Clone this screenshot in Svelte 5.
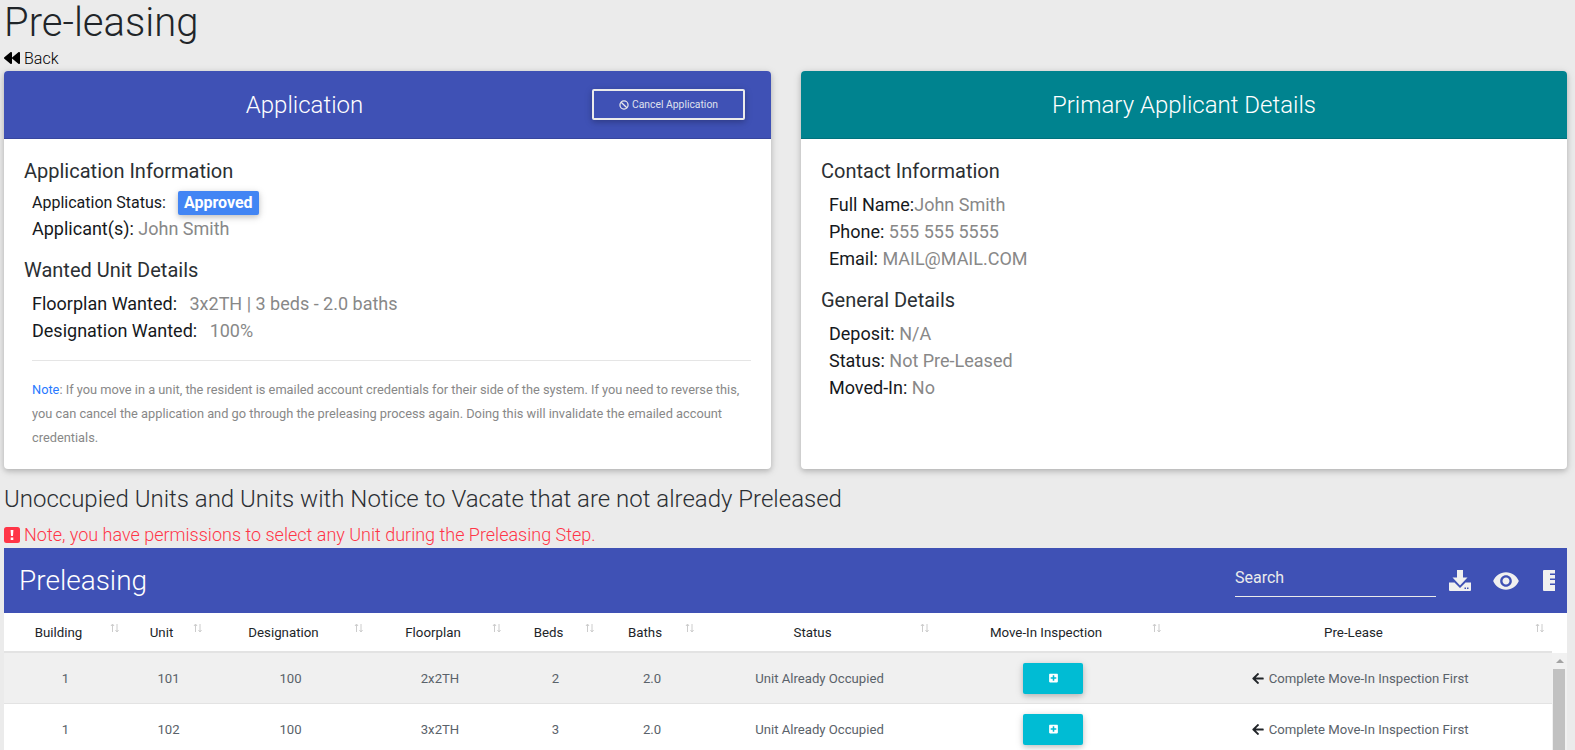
<script>
	const columns = ['Building', 'Unit', 'Designation', 'Floorplan', 'Beds', 'Baths', 'Status', 'Move-In Inspection', 'Pre-Lease'];

	const units = [
		{ building: 1, unit: 101, designation: 100, floorplan: '2x2TH', beds: 2, baths: '2.0' },
		{ building: 1, unit: 102, designation: 100, floorplan: '3x2TH', beds: 3, baths: '2.0' }
	];

	const plusSquare =
		'M400 32H48C21.5 32 0 53.5 0 80v352c0 26.5 21.5 48 48 48h352c26.5 0 48-21.5 48-48V80c0-26.5-21.5-48-48-48zm-32 252c0 6.6-5.4 12-12 12h-92v92c0 6.6-5.4 12-12 12h-56c-6.6 0-12-5.4-12-12v-92H92c-6.6 0-12-5.4-12-12v-56c0-6.6 5.4-12 12-12h92v-92c0-6.6 5.4-12 12-12h56c6.6 0 12 5.4 12 12v92h92c6.6 0 12 5.4 12 12v56z';
	const arrowLeft =
		'M257.5 445.1l-22.2 22.2c-9.4 9.4-24.6 9.4-33.9 0L7 273c-9.4-9.4-9.4-24.6 0-33.9L201.4 44.7c9.4-9.4 24.6-9.4 33.9 0l22.2 22.2c9.5 9.5 9.3 25-.4 34.3L136.6 216H424c13.3 0 24 10.7 24 24v32c0 13.3-10.7 24-24 24H136.6l120.5 114.8c9.8 9.3 10 24.8.4 34.3z';
</script>

<div class="page">
	<h1>Pre-leasing</h1>
	<a class="back" href="#back">
		<svg viewBox="0 0 512 512" class="back-icon"><path d="M11.5 280.6l192 160c20.6 17.2 52.5 2.8 52.5-24.6V96c0-27.4-31.9-41.8-52.5-24.6l-192 160c-15.3 12.8-15.3 36.4 0 49.2zm256 0l192 160c20.6 17.2 52.5 2.8 52.5-24.6V96c0-27.4-31.9-41.8-52.5-24.6l-192 160c-15.3 12.8-15.3 36.4 0 49.2z" /></svg>
		Back
	</a>

	<div class="cards">
		<section class="card">
			<header class="card-header indigo with-action">
				<h2>Application</h2>
				<button class="cancel">
					<svg viewBox="0 0 16 16" class="ban"><circle cx="8" cy="8" r="6.5" /><path d="M3.5 3.5l9 9" /></svg>
					Cancel Application
				</button>
			</header>
			<div class="card-body">
				<h3>Application Information</h3>
				<div class="info">
					<p class="status-line">Application Status: <span class="badge">Approved</span></p>
					<p>Applicant(s): <span class="muted">John Smith</span></p>
				</div>
				<h3>Wanted Unit Details</h3>
				<div class="info">
					<p>Floorplan Wanted: <span class="muted gap">3x2TH | 3 beds - 2.0 baths</span></p>
					<p>Designation Wanted: <span class="muted gap">100%</span></p>
				</div>
				<hr />
				<p class="note">
					<span class="note-label">Note</span>: If you move in a unit, the resident is emailed account
					credentials for their side of the system. If you need to reverse this, you can cancel the
					application and go through the preleasing process again. Doing this will invalidate the
					emailed account credentials.
				</p>
			</div>
		</section>

		<section class="card">
			<header class="card-header teal">
				<h2>Primary Applicant Details</h2>
			</header>
			<div class="card-body">
				<h3>Contact Information</h3>
				<div class="info">
					<p>Full Name:<span class="muted">John Smith</span></p>
					<p>Phone: <span class="muted">555 555 5555</span></p>
					<p>Email: <span class="muted">MAIL@MAIL.COM</span></p>
				</div>
				<h3>General Details</h3>
				<div class="info">
					<p>Deposit: <span class="muted">N/A</span></p>
					<p>Status: <span class="muted">Not Pre-Leased</span></p>
					<p>Moved-In: <span class="muted">No</span></p>
				</div>
			</div>
		</section>
	</div>

	<h4>Unoccupied Units and Units with Notice to Vacate that are not already Preleased</h4>
	<p class="warning">
		<svg viewBox="0 0 16 16" class="warning-icon">
			<rect width="16" height="16" rx="2.5" />
			<path class="mark" d="M6.6 3h2.8l-.4 6H7zM6.7 10.4h2.6V13H6.7z" />
		</svg>
		Note, you have permissions to select any Unit during the Preleasing Step.
	</p>

	<div class="table-card">
		<div class="toolbar">
			<span class="toolbar-title">Preleasing</span>
			<div class="toolbar-tools">
				<div class="search">Search</div>
				<svg viewBox="0 0 22 21" class="tool download">
					<path d="M8 0h6v7.500h4.500L11 15.500 3.500 7.500H8z" />
					<path d="M0 12.500h5.500l5.500 5.500 5.500-5.500H22V20a1 1 0 0 1-1 1H1a1 1 0 0 1-1-1z" />
					<path class="dots" d="M15.500 17.500H17v1.500h-1.500zM18 17.500h1.500v1.500H18z" />
				</svg>
				<svg viewBox="0 0 24 24" class="tool eye"><path d="M12 4.500C7 4.500 2.730 7.610 1 12c1.730 4.390 6 7.500 11 7.500s9.270-3.110 11-7.500c-1.730-4.390-6-7.500-11-7.500zM12 17c-2.760 0-5-2.240-5-5s2.240-5 5-5 5 2.240 5 5-2.240 5-5 5zm0-8c-1.660 0-3 1.340-3 3s1.340 3 3 3 3-1.340 3-3-1.340-3-3-3z" /></svg>
				<svg viewBox="0 0 12 21" class="ruler"><path d="M1 0h11v3.500H7V5h5v3.500H7V10h5v3.500H7V15h5v6H1a1 1 0 0 1-1-1V1a1 1 0 0 1 1-1z" /></svg>
			</div>
		</div>

		<div class="head-row">
			{#each columns as label}
				<div class="head-cell">
					{label}
					<svg viewBox="0 0 10 10" class="sort"><path d="M2.500 9V1.500M1 3l1.500-2L4 3" /><path d="M7 1v7.500M5.500 7L7 9l1.500-2" /></svg>
				</div>
			{/each}
		</div>

		<div class="scroll-area">
			<div class="rows">
				{#each units as row, i}
					<div class="row" class:striped={i % 2 === 0}>
						<div>{row.building}</div>
						<div>{row.unit}</div>
						<div>{row.designation}</div>
						<div>{row.floorplan}</div>
						<div>{row.beds}</div>
						<div>{row.baths}</div>
						<div>Unit Already Occupied</div>
						<div>
							<button class="inspect"><svg viewBox="0 0 448 512"><path d={plusSquare} /></svg></button>
						</div>
						<div>
							<svg viewBox="0 0 448 512" class="arrow"><path d={arrowLeft} /></svg>
							Complete Move-In Inspection First
						</div>
					</div>
				{/each}
			</div>
			<div class="scrollbar">
				<div class="scroll-up"></div>
				<div class="scroll-thumb"></div>
			</div>
		</div>
	</div>
</div>

<style>
	:global(body) {
		margin: 0;
		background: #ebebeb;
		overflow: hidden;
	}

	.page {
		height: 750px;
		overflow: hidden;
		padding: 0 8px 0 4px;
		box-sizing: border-box;
		font-family: Roboto, sans-serif;
		color: #212529;
	}

	h1 {
		margin: 0;
		height: 48px;
		font-size: 40px;
		line-height: 46px;
		font-weight: 300;
	}

	.back {
		display: flex;
		align-items: flex-start;
		gap: 4px;
		height: 23px;
		font-size: 16px;
		font-weight: 300;
		line-height: 21px;
		color: #000;
		text-decoration: none;
	}

	.back-icon {
		width: 16px;
		height: 16px;
		margin-top: 2px;
		fill: #000;
	}

	.cards {
		display: grid;
		grid-template-columns: 767px 766px;
		gap: 30px;
	}

	.card {
		height: 398px;
		background: #fff;
		border-radius: 4px;
		box-shadow: 0 2px 5px rgba(0, 0, 0, 0.16), 0 2px 10px rgba(0, 0, 0, 0.12);
		overflow: hidden;
	}

	.card-header {
		height: 68px;
		display: flex;
		align-items: center;
		justify-content: center;
		color: #fff;
		box-sizing: border-box;
		border-bottom: 1px solid rgba(0, 0, 0, 0.125);
	}

	.with-action {
		padding: 0 26px 0 13px;
	}

	.with-action h2 {
		flex: 1;
		text-align: center;
	}

	.indigo {
		background: #3f51b5;
	}

	.teal {
		background: #00838f;
	}

	h2 {
		margin: 0;
		font-size: 24px;
		font-weight: 300;
	}

	.cancel {
		width: 153px;
		height: 31px;
		display: flex;
		align-items: center;
		justify-content: center;
		gap: 3px;
		padding: 0;
		background: transparent;
		border: 2px solid #ebebeb;
		border-radius: 2px;
		color: #dfe0ee;
		font-family: inherit;
		font-size: 10.35px;
		box-shadow: 0 2px 5px rgba(0, 0, 0, 0.16), 0 2px 10px rgba(0, 0, 0, 0.12);
	}

	.ban {
		width: 10px;
		height: 10px;
		fill: none;
		stroke: #ebebeb;
		stroke-width: 2;
	}

	.card-body {
		padding: 20px;
	}

	h3 {
		margin: 0 0 8px;
		font-size: 20px;
		line-height: 24px;
		font-weight: 400;
		color: #2b2f33;
	}

	.info {
		margin: 0 0 16px 8px;
	}

	.info p {
		margin: 0;
		font-size: 18px;
		line-height: 27px;
		color: #16191c;
	}

	.info .status-line {
		font-size: 16px;
		line-height: 24px;
	}

	.muted {
		color: #888;
	}

	.gap {
		margin-left: 8px;
	}

	.badge {
		display: inline-block;
		margin-left: 8px;
		padding: 0 6px;
		line-height: 24px;
		background: #4285f4;
		color: #fff;
		font-weight: 700;
		border-radius: 2px;
		box-shadow: 0 2px 5px rgba(0, 0, 0, 0.16), 0 2px 10px rgba(0, 0, 0, 0.12);
	}

	hr {
		margin: 4px 0 17px 8px;
		border: none;
		border-top: 1px solid rgba(0, 0, 0, 0.1);
	}

	.note {
		margin: 0 0 0 8px;
		font-size: 12.8px;
		line-height: 24px;
		color: #888;
	}

	.note-label {
		color: #2979ff;
	}

	h4 {
		margin: 16px 0 0;
		font-size: 24px;
		line-height: 29px;
		font-weight: 300;
		color: #2b2f33;
	}

	.warning {
		display: flex;
		align-items: center;
		gap: 4px;
		margin: 9px 0 0;
		height: 23px;
		font-size: 18px;
		font-weight: 300;
		color: #ff3547;
	}

	.warning-icon {
		width: 16px;
		height: 16px;
		fill: #ff3547;
	}

	.warning-icon .mark {
		fill: #fff;
	}

	.table-card {
		margin-top: 2px;
		background: #fff;
	}

	.toolbar {
		height: 65px;
		background: #3f51b5;
		color: #fff;
		display: flex;
		align-items: center;
		justify-content: space-between;
		padding: 0 12px 0 15px;
	}

	.toolbar-title {
		font-size: 28px;
		font-weight: 300;
	}

	.toolbar-tools {
		display: flex;
		align-items: center;
	}

	.search {
		width: 201px;
		height: 36px;
		box-sizing: border-box;
		padding-top: 7px;
		margin: 0 13px 3px 0;
		border-bottom: 1px solid #ebebeb;
		font-size: 16px;
		color: #ebebeb;
	}

	.tool {
		fill: #f0f0f0;
	}

	.download {
		width: 22px;
		height: 21px;
		margin-right: 21px;
	}

	.download .dots {
		fill: #3f51b5;
	}

	.eye {
		width: 28px;
		height: 28px;
		margin-right: 23px;
	}

	.ruler {
		width: 12px;
		height: 21px;
		fill: #f0f0f0;
	}

	.head-row,
	.row {
		display: grid;
		grid-template-columns: 123px 83px 161px 138px 93px 100px 235px 232px 383px;
		text-align: center;
		box-sizing: border-box;
	}

	.head-row {
		height: 40px;
		border-bottom: 2px solid #e3e3e3;
		width: 1548px;
	}

	.head-cell {
		position: relative;
		box-sizing: border-box;
		padding-right: 14px;
		font-size: 13.3px;
		line-height: 39px;
		color: #212529;
	}

	.sort {
		position: absolute;
		right: 7px;
		top: 10px;
		width: 10px;
		height: 10px;
		fill: none;
		stroke: #ccc;
		stroke-width: 1;
	}

	.scroll-area {
		display: flex;
	}

	.rows {
		width: 1548px;
	}

	.row {
		height: 51px;
		align-items: center;
		border-bottom: 1px solid #e3e3e3;
		font-size: 13.15px;
		font-weight: 400;
		color: #5a626a;
	}

	.striped {
		background: #f0f0f0;
	}

	.inspect {
		width: 60px;
		height: 31px;
		padding: 0;
		margin-top: 3px;
		border: none;
		border-radius: 2px;
		background: #00bcd4;
		box-shadow: 0 2px 5px rgba(0, 0, 0, 0.16), 0 2px 10px rgba(0, 0, 0, 0.12);
	}

	.inspect svg {
		display: block;
		margin: 0 auto;
		width: 9px;
		height: 10px;
		fill: #fff;
	}

	.arrow {
		width: 12px;
		height: 13px;
		margin-right: 1px;
		vertical-align: -2px;
		fill: #212529;
	}

	.scrollbar {
		width: 15px;
		background: #f1f1f1;
	}

	.scroll-up {
		height: 16px;
		display: flex;
		justify-content: center;
		align-items: center;
	}

	.scroll-up::before {
		content: '';
		border-left: 4px solid transparent;
		border-right: 4px solid transparent;
		border-bottom: 4px solid #a3a3a3;
	}

	.scroll-thumb {
		height: 90px;
		margin: 0 2px 0 1px;
		background: #c1c1c1;
	}
</style>
